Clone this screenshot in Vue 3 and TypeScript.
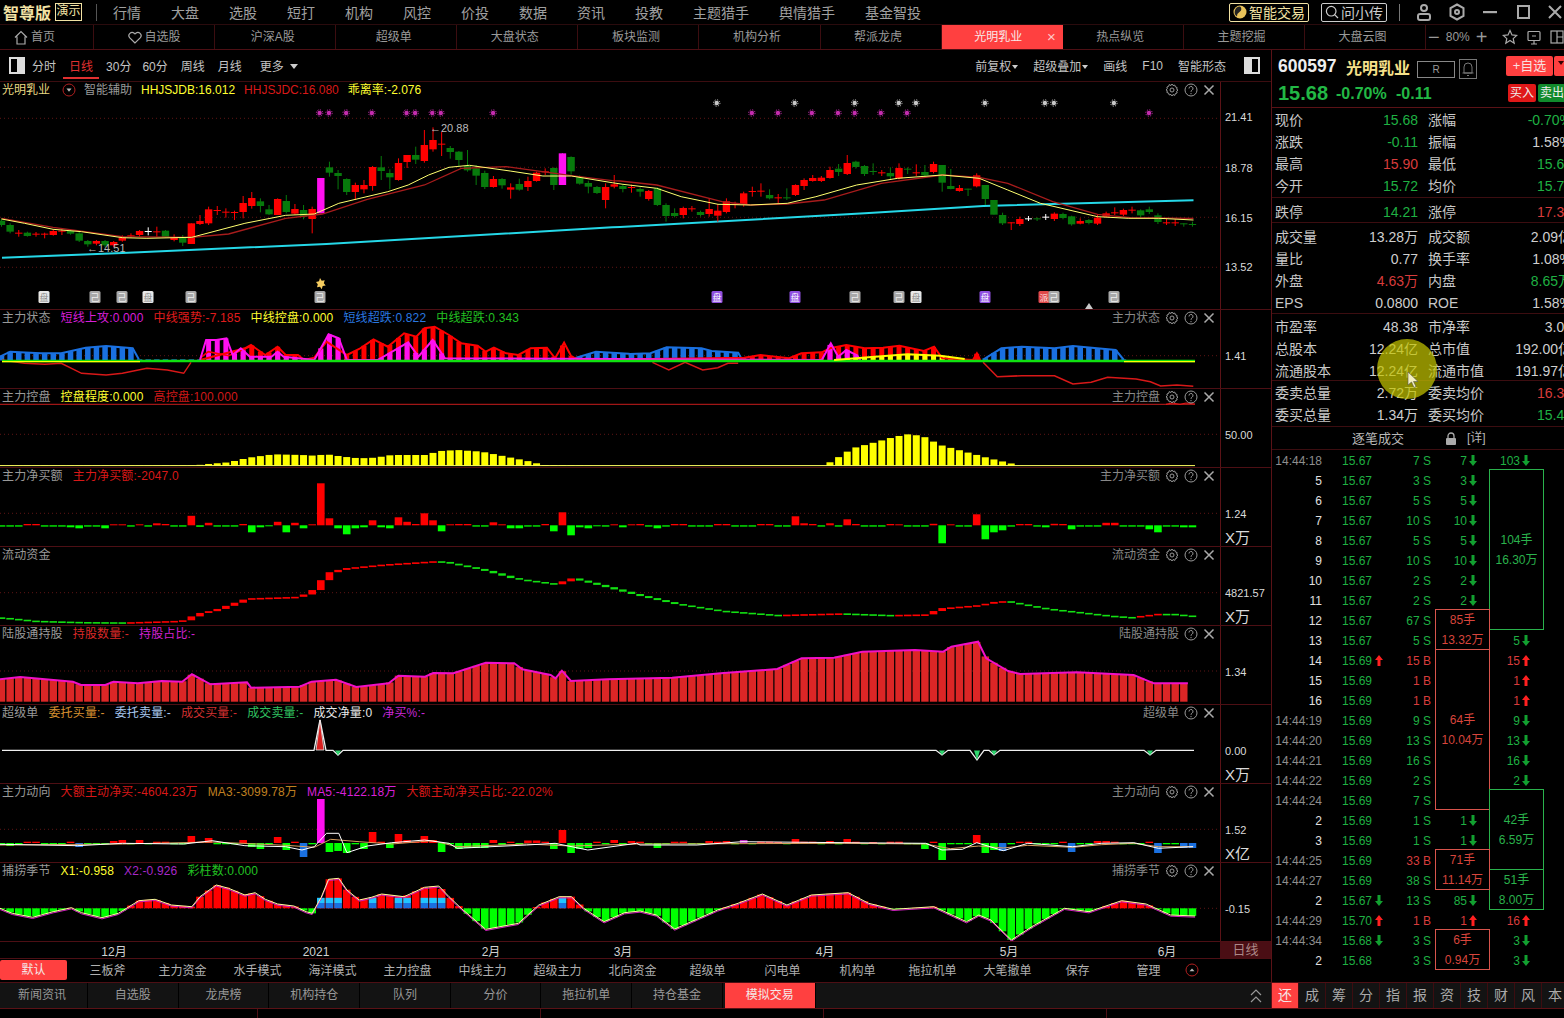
<script setup lang="ts">
import { computed } from 'vue';

type Pt = number[];
interface Bar { x: number; y: number; w: number; h: number; c: string }
interface Line { pts: string; c: string; w: number }
interface Panel {
  key: string;
  top: number;
  height: number;
  main?: boolean;
  legend: Array<[string, string]>;
  title?: string;
  gear: boolean;
  grid: number[];
  bars: Bar[];
  lines: Line[];
  ticks: Array<[string, number, boolean?]>;
}

const RED = '#ff0000';
const GREEN = '#00ff00';
const DGREEN = '#077a0c';
const BLUE = '#1a70e0';
const MAGENTA = '#ff10f0';
const YELLOW = '#ffff00';

const menus = ['行情', '大盘', '选股', '短打', '机构', '风控', '价投', '数据', '资讯', '投教', '主题猎手', '舆情猎手', '基金智投'];
const tabs = ['沪深A股', '超级单', '大盘状态', '板块监测', '机构分析', '帮派龙虎'];
const tabsAfter = ['热点纵览', '主题挖掘', '大盘云图'];
const periods = ['30分', '60分', '周线', '月线'];
const templates = ['三板斧', '主力资金', '水手模式', '海洋模式', '主力控盘', '中线主力', '超级主力', '北向资金', '超级单', '闪电单', '机构单', '拖拉机单', '大笔撤单', '保存', '管理'];
const bottomTabs = ['新闻资讯', '自选股', '龙虎榜', '机构持仓', '队列', '分价', '拖拉机单', '持仓基金'];
const sideTabs = ['还', '成', '筹', '分', '指', '报', '资', '技', '财', '风', '本'];
const dates: Array<[string, number]> = [['12月', 114], ['2021', 316], ['2月', 491], ['3月', 623], ['4月', 825], ['5月', 1009], ['6月', 1167]];

// 报价区: 标签/数值/颜色
const infoGroups = [
  { cls: 'g1', rows: [
    ['现价', '15.68', 'g', '涨幅', '-0.70%', 'g'],
    ['涨跌', '-0.11', 'g', '振幅', '1.58%', 'w'],
    ['最高', '15.90', 'r', '最低', '15.61', 'g'],
    ['今开', '15.72', 'g', '均价', '15.74', 'g'],
  ] },
  { cls: 'g2', rows: [['跌停', '14.21', 'g', '涨停', '17.37', 'r']] },
  { cls: 'g3', rows: [
    ['成交量', '13.28万', 'w', '成交额', '2.09亿', 'w'],
    ['量比', '0.77', 'w', '换手率', '1.08%', 'w'],
    ['外盘', '4.63万', 'r', '内盘', '8.65万', 'g'],
    ['EPS', '0.0800', 'w', 'ROE', '1.58%', 'w'],
  ] },
  { cls: 'g4', rows: [
    ['市盈率', '48.38', 'w', '市净率', '3.03', 'w'],
    ['总股本', '12.24亿', 'w', '总市值', '192.00亿', 'w'],
    ['流通股本', '12.24亿', 'w', '流通市值', '191.97亿', 'w'],
  ] },
  { cls: 'g5', rows: [
    ['委卖总量', '2.72万', 'w', '委卖均价', '16.34', 'r'],
    ['委买总量', '1.34万', 'w', '委买均价', '15.44', 'g'],
  ] },
];

// 逐笔: 时间, 价格, 价格箭头, 量, 方向, 第四列, 第五列 (d=下 u=上)
const ticks: Array<[string, string, string, string, string, string, string]> = [
  ['14:44:18', '15.67', '', '7', 'S', '7d', '103d'],
  ['5', '15.67', '', '3', 'S', '3d', ''],
  ['6', '15.67', '', '5', 'S', '5d', ''],
  ['7', '15.67', '', '10', 'S', '10d', ''],
  ['8', '15.67', '', '5', 'S', '5d', ''],
  ['9', '15.67', '', '10', 'S', '10d', ''],
  ['10', '15.67', '', '2', 'S', '2d', ''],
  ['11', '15.67', '', '2', 'S', '2d', ''],
  ['12', '15.67', '', '67', 'S', '', ''],
  ['13', '15.67', '', '5', 'S', '', '5d'],
  ['14', '15.69', 'u', '15', 'B', '', '15u'],
  ['15', '15.69', '', '1', 'B', '', '1u'],
  ['16', '15.69', '', '1', 'B', '', '1u'],
  ['14:44:19', '15.69', '', '9', 'S', '', '9d'],
  ['14:44:20', '15.69', '', '13', 'S', '', '13d'],
  ['14:44:21', '15.69', '', '16', 'S', '', '16d'],
  ['14:44:22', '15.69', '', '2', 'S', '', '2d'],
  ['14:44:24', '15.69', '', '7', 'S', '', ''],
  ['2', '15.69', '', '1', 'S', '1d', ''],
  ['3', '15.69', '', '1', 'S', '1d', ''],
  ['14:44:25', '15.69', '', '33', 'B', '', ''],
  ['14:44:27', '15.69', '', '38', 'S', '', ''],
  ['2', '15.67', 'd', '13', 'S', '85d', ''],
  ['14:44:29', '15.70', 'u', '1', 'B', '1u', '16u'],
  ['14:44:34', '15.68', 'd', '3', 'S', '', '3d'],
  ['2', '15.68', '', '3', 'S', '', '3d'],
];

const dealBoxes = [
  { a: '104手', b: '16.30万', col: 2, top: 19, h: 161, c: 'g' },
  { a: '85手', b: '13.32万', col: 1, top: 159, h: 41, c: 'r' },
  { a: '64手', b: '10.04万', col: 1, top: 199, h: 161, c: 'r' },
  { a: '42手', b: '6.59万', col: 2, top: 339, h: 81, c: 'g' },
  { a: '51手', b: '8.00万', col: 2, top: 419, h: 41, c: 'g' },
  { a: '71手', b: '11.14万', col: 1, top: 399, h: 41, c: 'r' },
  { a: '6手', b: '0.94万', col: 1, top: 479, h: 41, c: 'r' },
];

const xi = (i: number) => 1.5 + 8.63 * i;

// 放大图坐标换算成页面坐标 (横向2.45 纵向3)
const Z = (pts: Pt[], x0: number, y0: number, sx = 2.45) => pts.map(([a, b]) => [x0 + a / sx, y0 + b / 3]);

function lerp(keys: Pt[], x: number) {
  if (x <= keys[0][0]) return keys[0][1];
  for (let i = 1; i < keys.length; i++) {
    if (x <= keys[i][0]) {
      const t = (x - keys[i - 1][0]) / (keys[i][0] - keys[i - 1][0]);
      return keys[i - 1][1] + t * (keys[i][1] - keys[i - 1][1]);
    }
  }
  return keys[keys.length - 1][1];
}

const toPts = (pts: Pt[]) => pts.map(p => `${p[0].toFixed(1)},${p[1].toFixed(1)}`).join(' ');

// 包络柱: 柱子顶部沿 keys 走
function envBars(keys: Pt[], base: number, color: string, w: number, x1 = 0, x2 = 1200) {
  const out: Bar[] = [];
  for (let i = 0; i < 139; i++) {
    const x = xi(i);
    if (x < x1 || x > x2) continue;
    const top = lerp(keys, x);
    if (top < base) out.push({ x: x - w / 2, y: top, w, h: base - top, c: color });
  }
  return out;
}

// 净额柱: vals 里是高度, 正红负绿
function netBars(vals: Record<number, number | [number, string]>, base: number) {
  const out: Bar[] = [];
  for (let i = 0; i < 139; i++) {
    const v = vals[i];
    let val = i % 5 < 3 ? -1.3 : 1.3;
    let c = '';
    if (Array.isArray(v)) { val = v[0]; c = v[1]; }
    else if (v !== undefined) val = v;
    if (!c) c = val > 0 ? RED : GREEN;
    out.push({ x: xi(i) - 3.8, y: val > 0 ? base - val : base, w: 7.6, h: Math.abs(val), c });
  }
  return out;
}

// 日K: 实体上, 实体下, 最高, 最低, 类型 0绿 1红 2洋红 3白
const candles: number[][] = [
  [392, 405, 385, 410, 0], [405, 425, 400, 430, 0], [428, 431, 420, 440, 1], [428, 438, 425, 440, 0], [431, 434, 426, 440, 1],
  [431, 434, 428, 445, 1], [423, 435, 418, 437, 1], [422, 424, 415, 435, 1], [423, 431, 420, 434, 0], [430, 452, 426, 456, 0],
  [453, 463, 450, 470, 0], [453, 461, 450, 466, 1], [453, 466, 450, 472, 0], [456, 466, 453, 472, 1], [443, 452, 436, 455, 1],
  [436, 438, 430, 443, 1], [423, 435, 420, 440, 1], [423, 425, 412, 436, 3], [424, 426, 410, 440, 1], [422, 441, 420, 443, 0],
  [442, 450, 433, 454, 1], [441, 458, 435, 468, 0], [400, 462, 400, 462, 1], [393, 402, 375, 405, 1], [358, 400, 350, 405, 1],
  [360, 362, 348, 375, 1], [365, 367, 355, 383, 1], [366, 368, 362, 390, 1], [339, 366, 318, 385, 1], [324, 348, 306, 356, 1],
  [334, 348, 325, 367, 0], [358, 373, 345, 375, 0], [327, 375, 325, 375, 1], [333, 366, 315, 370, 0], [357, 371, 342, 374, 1],
  [360, 380, 345, 388, 0], [357, 387, 350, 430, 1], [264, 370, 264, 370, 2], [232, 248, 215, 260, 0], [249, 258, 240, 298, 0],
  [267, 306, 265, 315, 0], [285, 306, 278, 330, 1], [285, 298, 270, 310, 1], [231, 288, 228, 302, 1], [232, 243, 198, 270, 0],
  [249, 262, 238, 298, 0], [219, 270, 205, 272, 1], [195, 216, 195, 234, 1], [195, 209, 170, 222, 0], [165, 213, 120, 218, 1],
  [150, 178, 112, 185, 1], [161, 163, 125, 198, 1], [174, 186, 168, 206, 0], [185, 210, 183, 228, 0], [228, 241, 180, 245, 0],
  [235, 257, 225, 285, 0], [249, 291, 242, 297, 0], [267, 291, 258, 293, 1], [267, 286, 264, 296, 0], [292, 299, 280, 326, 1],
  [282, 299, 266, 302, 0], [273, 291, 260, 303, 1], [248, 273, 245, 275, 1], [244, 246, 235, 255, 1], [234, 285, 232, 300, 0],
  [190, 285, 190, 285, 2], [201, 244, 199, 254, 0], [262, 281, 256, 284, 0], [279, 290, 272, 310, 0], [291, 309, 288, 312, 0],
  [291, 330, 280, 355, 1], [283, 290, 255, 295, 1], [288, 297, 282, 307, 0], [291, 293, 284, 308, 1], [297, 305, 292, 320, 0],
  [303, 327, 300, 332, 1], [295, 345, 292, 348, 0], [345, 378, 340, 395, 0], [369, 378, 355, 382, 0], [354, 375, 350, 385, 1],
  [355, 357, 348, 365, 1], [366, 375, 362, 380, 0], [357, 372, 325, 380, 1], [362, 377, 343, 395, 1], [334, 366, 325, 370, 1],
  [341, 343, 335, 355, 1], [310, 342, 305, 350, 1], [303, 305, 290, 320, 1], [302, 304, 280, 320, 1], [315, 325, 298, 328, 0],
  [322, 324, 312, 340, 1], [322, 324, 295, 330, 0], [285, 315, 283, 318, 1], [270, 288, 265, 300, 1], [264, 273, 255, 275, 1],
  [263, 273, 258, 276, 1], [240, 264, 230, 266, 1], [236, 246, 222, 258, 0], [219, 252, 195, 255, 1], [215, 231, 212, 236, 0],
  [228, 252, 225, 258, 0], [243, 245, 220, 255, 0], [247, 250, 240, 258, 1], [249, 259, 232, 268, 0], [234, 265, 220, 268, 1],
  [236, 238, 232, 252, 0], [247, 249, 223, 258, 1], [246, 256, 225, 262, 0], [222, 246, 215, 250, 1], [225, 278, 225, 305, 0],
  [288, 297, 237, 298, 0], [294, 303, 285, 305, 1], [296, 298, 296, 318, 0], [256, 289, 250, 292, 1], [285, 327, 285, 345, 0],
  [330, 374, 330, 374, 0], [375, 400, 368, 405, 0], [397, 399, 397, 420, 1], [387, 402, 380, 408, 1], [385, 387, 378, 393, 3],
  [385, 387, 382, 393, 0], [380, 382, 372, 390, 3], [371, 387, 367, 393, 1], [372, 384, 368, 388, 0], [379, 403, 377, 407, 0],
  [393, 401, 385, 403, 1], [390, 399, 387, 403, 0], [383, 401, 372, 405, 1], [370, 380, 365, 382, 1], [367, 369, 352, 375, 1],
  [360, 374, 356, 378, 1], [359, 361, 350, 370, 1], [361, 376, 358, 382, 0], [358, 366, 350, 372, 0], [376, 396, 370, 402, 0],
  [397, 399, 385, 405, 1], [397, 399, 388, 408, 1], [400, 402, 400, 410, 0], [402, 404, 395, 410, 0],
];

function candleBars() {
  const out: Bar[] = [];
  const colors = [DGREEN, RED, MAGENTA, '#ffffff'];
  candles.forEach((k, i) => {
    const x = xi(i);
    const c = colors[k[4]];
    const y = (v: number) => 90 + v / 3;
    out.push({ x: x - 0.5, y: y(k[2]), w: 1, h: (k[3] - k[2]) / 3, c });
    const w = k[4] === 3 ? 7 : 7.4;
    out.push({ x: x - w / 2, y: y(k[0]), w, h: Math.max(1, (k[1] - k[0]) / 3), c });
  });
  return out;
}

const yellowMa = [
  ...Z([[4, 387], [60, 400], [130, 418], [200, 425], [300, 443], [360, 445], [470, 442], [600, 400], [700, 376], [770, 372], [830, 340], [950, 305], [1000, 285], [1050, 255], [1100, 232], [1150, 226], [1250, 243], [1330, 258], [1400, 258], [1500, 278]], 0, 90),
  ...Z([[7, 283], [90, 295], [150, 320], [240, 343], [320, 345], [410, 340], [480, 320], [580, 285], [680, 265], [790, 255], [880, 265], [950, 300], [1030, 340], [1100, 360], [1170, 380], [1245, 385], [1320, 385], [1405, 390]], 620, 90),
];
const redMa = [
  ...Z([[4, 385], [130, 412], [300, 440], [470, 442], [560, 432], [700, 385], [790, 372], [900, 328], [1040, 285], [1130, 235], [1240, 230], [1400, 257], [1500, 272]], 0, 90),
  ...Z([[0, 273], [90, 285], [250, 335], [320, 345], [410, 342], [500, 330], [640, 280], [790, 255], [880, 262], [950, 280], [1060, 335], [1170, 373], [1250, 383], [1405, 385]], 620, 90),
];
const cyanMa = [
  ...Z([[5, 503], [300, 489], [800, 462], [1500, 412]], 0, 90),
  ...Z([[0, 411], [600, 370], [890, 348], [1405, 331]], 620, 90),
];

// 主力状态
const p1Blue = [
  ...Z([[0, 155], [25, 140], [100, 145], [150, 145], [210, 128], [260, 123], [325, 130], [340, 163], [1400, 163], [1460, 140], [1540, 146]], 0, 305),
  ...Z([[0, 147], [50, 145], [90, 127], [175, 130], [200, 138], [265, 143], [275, 165], [869, 165], [870, 160], [910, 130], [960, 125], [1040, 130], [1085, 123], [1190, 135], [1210, 165]], 630, 305),
];
const p1Red = [
  ...Z([[490, 165], [600, 130], [615, 120], [650, 150], [680, 125], [700, 150], [730, 150], [745, 165], [770, 158], [800, 110], [850, 150], [880, 132], [915, 103], [950, 125], [990, 85], [1020, 95], [1040, 70], [1065, 65], [1100, 90], [1130, 115], [1170, 122], [1190, 140], [1210, 128], [1240, 145], [1270, 150], [1300, 130], [1340, 128], [1360, 160], [1382, 113], [1400, 155], [1420, 165]], 0, 305),
  ...Z([[280, 158], [320, 150], [390, 160], [420, 145], [470, 142], [490, 130], [530, 120], [575, 130], [620, 128], [660, 122], [720, 138], [745, 125], [765, 160], [840, 165], [850, 145], [858, 165]], 630, 305),
];
const p1Mag = [
  ...Z([[490, 165], [505, 105], [530, 105], [555, 100], [570, 150], [590, 130], [612, 155], [665, 155], [680, 140], [695, 155], [770, 165], [805, 88], [830, 100], [850, 165], [925, 165], [1000, 112], [1025, 155], [1060, 105], [1090, 160]], 0, 305),
  ...Z([[470, 165], [492, 115], [510, 155], [530, 135], [555, 150], [565, 165]], 630, 305),
];
const p1Yellow = Z([[500, 165], [600, 155], [680, 148], [760, 152], [820, 162]], 630, 305);
const p1Low = [
  ...Z([[5, 165], [60, 175], [110, 178], [150, 175], [200, 205], [260, 210], [300, 205], [360, 190], [410, 195], [450, 205], [468, 172]], 0, 305),
];
const p1Low2 = Z([[55, 172], [95, 195], [135, 172], [178, 195], [215, 188], [240, 175], [265, 175]], 630, 305);
const p1Low3 = Z([[865, 172], [900, 215], [960, 212], [1040, 212], [1085, 237], [1130, 232], [1170, 217], [1240, 222], [1275, 230], [1300, 243], [1340, 240], [1380, 244]], 630, 305);
const p1Top = Z([[490, 160], [510, 140], [560, 152], [612, 125]], 0, 305);

// 主力控盘
const p2Keys = [
  ...Z([[480, 481], [500, 478], [560, 472], [610, 458], [670, 448], [740, 450], [770, 452], [800, 448], [840, 455], [880, 460], [920, 458], [960, 450], [1000, 450], [1040, 450], [1080, 438], [1120, 435], [1180, 440], [1240, 455], [1300, 470], [1330, 480], [1500, 482]], 0, 305),
  ...Z([[475, 482], [500, 465], [545, 430], [600, 412], [650, 395], [685, 387], [720, 395], [760, 420], [820, 440], [880, 460], [950, 480], [960, 483]], 630, 305),
];

const p3Vals: Record<number, number> = {
  8: -2, 9: -3, 12: -3, 13: 1, 14: 1, 16: 1, 18: 2, 22: 9.5, 23: -1.5, 24: 2.5, 29: -7, 30: -2, 31: -1, 32: 3.5, 33: -7, 34: 2.5, 35: -3, 36: 1,
  37: 42, 38: 7, 39: -3, 40: -9, 41: -3, 42: -2, 43: 5, 44: -2, 45: -3, 46: 8, 47: 3.5, 49: 12, 50: 5, 51: -6, 52: 1, 57: 3, 58: 1, 59: -3, 60: -3,
  64: -6, 65: 13, 66: -10, 67: -2, 68: -3, 69: -1, 71: 1, 72: -2, 73: 1, 76: -3, 92: 9, 93: 2, 96: 2, 98: 6, 104: 1, 108: 1.5, 109: -18, 110: 1,
  113: 11, 114: -14, 115: -7, 116: -5, 121: -2, 122: 1.5, 124: -4, 128: 2.5, 129: 2.5, 133: -4, 134: -7, 137: -2, 138: -2,
};

// 流动资金
const p4Keys = Z([[0, 217], [40, 227], [100, 231], [160, 232], [230, 227], [250, 205], [270, 195], [310, 160], [375, 155], [395, 130], [407, 85], [430, 70], [480, 58], [545, 48], [600, 75], [640, 102], [690, 118], [710, 100], [740, 118], [790, 150], [840, 178], [890, 197], [960, 210], [1040, 205], [1100, 210], [1150, 208], [1165, 190], [1215, 180], [1240, 167], [1290, 190], [1370, 212], [1400, 217], [1440, 205], [1478, 214]], 0, 545, 1.235);
function flowBars() {
  const out: Bar[] = [];
  for (let i = 0; i < 139; i++) {
    const a = lerp(p4Keys, xi(i) - 4.3);
    const b = lerp(p4Keys, xi(i) + 4.3);
    out.push({ x: xi(i) - 3.8, y: Math.min(a, b), w: 7.6, h: Math.max(1.6, Math.abs(a - b)), c: b < a - 0.1 ? RED : '#12e012' });
  }
  return out;
}

// 陆股通持股
const p5Keys = Z([[0, 403], [25, 396], [90, 410], [100, 420], [130, 420], [140, 410], [170, 415], [200, 408], [225, 410], [237, 388], [260, 418], [305, 412], [310, 428], [370, 425], [385, 410], [415, 404], [440, 426], [480, 415], [492, 392], [525, 395], [535, 384], [560, 385], [600, 353], [635, 355], [645, 373], [680, 390], [686, 400], [694, 377], [705, 408], [750, 403], [830, 398], [890, 385], [960, 372], [990, 340], [1030, 338], [1065, 320], [1130, 315], [1165, 320], [1175, 305], [1208, 290], [1218, 340], [1245, 378], [1260, 387], [1330, 382], [1400, 390], [1425, 415], [1467, 415]], 0, 545, 1.235);

// 超级单
const p6Line = [[2, 750.3], [314, 750.3], [320, 720], [326, 750.3], [333, 750.3], [338, 755], [343, 750.3], [936, 750.3], [942, 755], [948, 750.3], [970, 750.3], [977, 760], [984, 750.3], [989, 750.3], [994, 755], [1000, 750.3], [1144, 750.3], [1150, 755], [1156, 750.3], [1194, 750.3]];

// 主力动向
const p7Vals: Record<number, number | [number, string]> = {
  1: -3, 9: [-4, BLUE], 13: 2, 14: 3, 16: 3, 22: 7, 24: 5, 28: 3, 29: -4, 30: -6, 32: 6, 33: -7, 35: [-14, BLUE], 37: [44, MAGENTA], 38: -9, 39: -8, 40: -10,
  42: -6, 43: 11, 45: -5, 46: 9, 47: 3, 49: 7, 50: 3, 51: -9, 53: -6, 54: -5, 55: -5, 56: -5, 57: 3, 58: -2, 61: 2.5, 62: 2.5, 64: -6, 65: 13, 66: -10,
  67: -6, 68: -5, 71: 3, 73: 2, 76: -5, 82: 2, 84: 2, 86: [3, '#c030c0'], 90: 1, 92: 4, 96: 2, 98: 4, 101: 1, 107: -6, 109: -17, 113: 8, 114: -10, 115: -7,
  116: [-8, BLUE], 124: [-9, BLUE], 127: 2, 128: 2, 134: [-10, BLUE], 137: [-5, BLUE], 138: [-5, BLUE],
};
const p7White = [
  ...Z([[0, 193], [190, 197], [300, 190], [450, 192], [520, 182], [600, 197], [700, 200], [740, 210], [770, 200], [800, 160], [830, 160], [850, 218], [900, 198], [960, 188], [1040, 180], [1100, 190], [1120, 205], [1290, 195], [1360, 190], [1440, 210], [1560, 190]], 0, 780),
  ...Z([[0, 195], [140, 195], [250, 185], [500, 188], [700, 190], [740, 210], [790, 208], [825, 188], [890, 212], [950, 190], [1060, 200], [1130, 190], [1210, 188], [1270, 205], [1355, 200]], 640, 780),
];
const p7Tan = [
  ...Z([[0, 195], [300, 192], [520, 186], [700, 196], [770, 202], [810, 178], [880, 185], [960, 192], [1060, 182], [1120, 200], [1290, 192], [1400, 198], [1560, 192]], 0, 780),
  ...Z([[0, 192], [500, 190], [700, 192], [760, 206], [830, 198], [890, 204], [950, 196], [1060, 202], [1130, 194], [1210, 190], [1270, 200], [1355, 200]], 640, 780),
];

// 捕捞季节
const p8Keys = [
  ...Z([[0, 385], [30, 400], [80, 412], [130, 395], [175, 383], [200, 398], [250, 413], [290, 400], [340, 362], [380, 358], [420, 375], [470, 380], [490, 350], [530, 315], [560, 325], [600, 345], [625, 338], [650, 358], [680, 372], [720, 378], [750, 395], [765, 400], [787, 352], [805, 298], [830, 295], [850, 330], [880, 360], [910, 352], [935, 342], [990, 350], [1040, 322], [1075, 318], [1100, 350], [1130, 385], [1190, 448], [1270, 430], [1320, 375], [1370, 350], [1400, 350], [1430, 385], [1480, 425], [1530, 398]], 0, 780),
  ...Z([[0, 393], [40, 405], [85, 447], [190, 390], [240, 370], [300, 342], [360, 375], [420, 345], [510, 338], [560, 370], [620, 388], [720, 380], [800, 425], [830, 405], [860, 420], [910, 480], [960, 440], [1040, 385], [1100, 395], [1180, 362], [1240, 372], [1300, 405], [1360, 408]], 640, 780),
];
function seasonBars() {
  const base = 908.3;
  const out: Bar[] = [];
  const capped = [37, 38, 39, 43, 46, 47, 49, 50, 51, 65];
  for (let i = 0; i < 139; i++) {
    const x = xi(i);
    const top = lerp(p8Keys, x);
    if (top < base) {
      out.push({ x: x - 3.8, y: top, w: 7.6, h: base - top, c: RED });
      if (capped.includes(i)) {
        out.push({ x: x - 3.8, y: base - 10.5, w: 7.6, h: 5.2, c: '#22c4ff' });
        out.push({ x: x - 3.8, y: base - 5.3, w: 7.6, h: 5.3, c: BLUE });
      }
    } else {
      out.push({ x: x - 3.8, y: base, w: 7.6, h: top - base, c: GREEN });
    }
  }
  return out;
}

const panels = computed<Panel[]>(() => [
  {
    key: 'kline', top: 82, height: 228, main: true, gear: true,
    legend: [['智能辅助', '#999'], ['HHJSJDB:16.012', '#ffff30'], ['HHJSJDC:16.080', '#d81818'], ['乖离率:-2.076', '#ffff30']],
    grid: [118.3, 167.3, 217.3, 267.3],
    bars: candleBars(),
    lines: [
      { pts: toPts(cyanMa), c: '#25d8e8', w: 2 },
      { pts: toPts(redMa), c: '#a81c1c', w: 1.3 },
      { pts: toPts(yellowMa), c: '#ffff70', w: 1 },
    ],
    ticks: [['21.41', 117], ['18.78', 168], ['16.15', 218], ['13.52', 267]],
  },
  {
    key: 'status', top: 310, height: 79, title: '主力状态', gear: true,
    legend: [['主力状态', '#999'], ['短线上攻:0.000', '#d81ed8'], ['中线强势:-7.185', '#e01c1c'], ['中线控盘:0.000', '#ffff30'], ['短线超跌:0.822', '#2a78e0'], ['中线超跌:0.343', '#22c022']],
    grid: [355.7],
    bars: [
      ...envBars(p1Blue, 360.5, BLUE, 5.5),
      ...envBars(p1Red, 360.5, RED, 5, 190, 990),
      ...envBars(p1Mag, 360.5, MAGENTA, 5, 190, 880),
      ...envBars(p1Yellow, 360.5, YELLOW, 5, 830, 970),
    ],
    lines: [
      { pts: toPts(p1Blue.filter(p => p[0] < 142)), c: BLUE, w: 2 },
      { pts: toPts(p1Blue.filter(p => p[0] > 570 && p[0] < 745)), c: BLUE, w: 2 },
      { pts: toPts(p1Blue.filter(p => p[0] > 984)), c: BLUE, w: 2 },
      { pts: toPts(p1Red), c: RED, w: 2 },
      { pts: toPts(p1Top), c: RED, w: 1.6 },
      { pts: toPts(p1Mag), c: MAGENTA, w: 2 },
      { pts: toPts(p1Low), c: '#d81818', w: 1.4 },
      { pts: toPts(p1Low2), c: '#d81818', w: 1.4 },
      { pts: toPts(p1Low3), c: '#d81818', w: 1.6 },
      { pts: '2,361 1195,361', c: '#10e010', w: 2.4 },
      { pts: '2,361.6 140,361.6', c: YELLOW, w: 1.2 },
      { pts: '1124,361.6 1195,361.6', c: YELLOW, w: 1.2 },
      { pts: toPts(p1Yellow), c: YELLOW, w: 2 },
    ],
    ticks: [['1.41', 356]],
  },
  {
    key: 'control', top: 389, height: 79, title: '主力控盘', gear: true,
    legend: [['主力控盘', '#999'], ['控盘程度:0.000', '#ffff30'], ['高控盘:100.000', '#d01818']],
    grid: [434.3],
    bars: envBars(p2Keys, 465.6, YELLOW, 7),
    lines: [
      { pts: '0,404.3 1195,404.3', c: '#a01616', w: 1.2 },
      { pts: '1166,404.3 1172,403 1180,404.3 1186,403 1195,404', c: '#e01818', w: 1.2 },
      { pts: '0,465.6 1195,465.6', c: '#ffff60', w: 1 },
    ],
    ticks: [['50.00', 435]],
  },
  {
    key: 'netbuy', top: 468, height: 79, title: '主力净买额', gear: true,
    legend: [['主力净买额', '#999'], ['主力净买额:-2047.0', '#d81818']],
    grid: [513.3],
    bars: netBars(p3Vals, 525.3),
    lines: [],
    ticks: [['1.24', 514], ['X万', 536, true]],
  },
  {
    key: 'flow', top: 547, height: 79, title: '流动资金', gear: true,
    legend: [['流动资金', '#999']],
    grid: [592.7],
    bars: flowBars(),
    lines: [],
    ticks: [['4821.57', 593], ['X万', 615, true]],
  },
  {
    key: 'north', top: 626, height: 79, title: '陆股通持股', gear: false,
    legend: [['陆股通持股', '#999'], ['持股数量:-', '#d82828'], ['持股占比:-', '#d020d0']],
    grid: [671],
    bars: envBars(p5Keys, 701.7, '#dc2626', 7.4, 0, 1188),
    lines: [{ pts: toPts(p5Keys), c: '#f010c8', w: 2 }],
    ticks: [['1.34', 672]],
  },
  {
    key: 'super', top: 705, height: 79, title: '超级单', gear: false,
    legend: [['超级单', '#999'], ['委托买量:-', '#d89030'], ['委托卖量:-', '#a8c8f0'], ['成交买量:-', '#d03030'], ['成交卖量:-', '#30c060'], ['成交净量:0', '#e8e8e8'], ['净买%:-', '#c828d8']],
    grid: [],
    bars: [],
    lines: [{ pts: toPts(p6Line), c: '#f0f0f0', w: 1.3 }],
    ticks: [['0.00', 751], ['X万', 773, true]],
  },
  {
    key: 'move', top: 784, height: 79, title: '主力动向', gear: true,
    legend: [['主力动向', '#999'], ['大额主动净买:-4604.23万', '#d81818'], ['MA3:-3099.78万', '#c08020'], ['MA5:-4122.18万', '#d820d8'], ['大额主动净买占比:-22.02%', '#d81818']],
    grid: [829.3],
    bars: netBars(p7Vals, 843),
    lines: [
      { pts: toPts(p7Tan), c: '#d8a060', w: 1 },
      { pts: toPts(p7White), c: '#ffffff', w: 1 },
    ],
    ticks: [['1.52', 830], ['X亿', 852, true]],
  },
  {
    key: 'season', top: 863, height: 79, title: '捕捞季节', gear: true,
    legend: [['捕捞季节', '#999'], ['X1:-0.958', '#ffff30'], ['X2:-0.926', '#a828c8'], ['彩柱数:0.000', '#22c022']],
    grid: [908.3],
    bars: seasonBars(),
    lines: [
      { pts: toPts(p8Keys.map(p => [p[0], p[1] + 1.2])), c: '#d020c0', w: 1 },
      { pts: toPts(p8Keys), c: '#ffffa0', w: 1 },
    ],
    ticks: [['-0.15', 909]],
  },
]);

const superDips = [[338, 4.8], [942, 4.8], [977, 9.5], [994, 4.8], [1150, 4.8]];
const pinkStars = [...[783, 806, 848, 911, 996, 1017, 1059, 1080, 1208].map(z => z / 2.45), ...[323, 387, 470, 534, 575, 639, 703, 1296].map(z => 620 + z / 2.45)];
const greyStars = [237, 428, 575, 683, 725, 894, 1041, 1063, 1210].map(z => 620 + z / 2.45);
// 事件标记: x, 类型 g灰 w白 p紫 r红
const markers: Array<[number, string]> = [[44, 'w'], [95, 'g'], [122, 'g'], [148, 'w'], [191, 'g'], [320, 'g'], [717, 'p'], [795, 'p'], [855, 'g'], [899, 'g'], [916, 'w'], [985, 'p'], [1044, 'r'], [1054, 'g'], [1114, 'g']];

const isUp = (s: string) => s.endsWith('u');
const num = (s: string) => s.slice(0, -1);
</script>

<template>
  <div class="app">
    <header class="topbar">
      <div class="logo">智尊版</div>
      <div class="demo">演示</div>
      <i class="sep"></i>
      <nav class="menu"><span v-for="m in menus" :key="m">{{ m }}</span></nav>
      <div class="top-right">
        <button class="pill trade">
          <svg width="14" height="14" viewBox="0 0 14 14"><circle cx="7" cy="7" r="6.5" fill="#e8c25a" /><path d="M7 1.5a5.5 5.5 0 0 0-3 10 6 6 0 0 1 3-5 3 3 0 0 0 0-5z" fill="#222" /></svg>
          智能交易
        </button>
        <button class="pill ask">
          <svg width="14" height="14" viewBox="0 0 14 14" fill="none" stroke="#ccc" stroke-width="1.2"><circle cx="6.2" cy="6.2" r="4.8" /><path d="M9.6 9.6 13 13" /></svg>
          问小传
        </button>
        <i class="sep light"></i>
        <svg class="win" width="16" height="18" viewBox="0 0 16 18" fill="none" stroke="#aaa" stroke-width="2"><circle cx="8" cy="5" r="3" /><rect x="2" y="11" width="12" height="6" rx="2" /></svg>
        <svg class="win" width="16" height="18" viewBox="0 0 16 18" fill="none" stroke="#aaa" stroke-width="2"><path d="M8 1.5 14.5 5v8L8 16.5 1.5 13V5z" /><circle cx="8" cy="9" r="2" /></svg>
        <svg class="win" width="16" height="18" viewBox="0 0 16 18"><rect x="1" y="8" width="14" height="2.2" fill="#aaa" /></svg>
        <svg class="win" width="16" height="18" viewBox="0 0 16 18" fill="none" stroke="#aaa" stroke-width="2"><rect x="3" y="3" width="11" height="12" /></svg>
        <svg class="win" width="16" height="18" viewBox="0 0 16 18" stroke="#aaa" stroke-width="2"><path d="M2 3l12 12M14 3 2 15" /></svg>
      </div>
    </header>

    <div class="tabs">
      <div class="tab home">
        <svg width="14" height="15" viewBox="0 0 14 15" fill="none" stroke="#aaa" stroke-width="1.2"><path d="M1 7.5 7 1.5l6 6M3 6.5V14h8V6.5" /></svg>
        首页
      </div>
      <div class="tab fav">
        <svg width="14" height="13" viewBox="0 0 14 13" fill="none" stroke="#aaa" stroke-width="1.2"><path d="M7 12 1.6 6.6a3.2 3.2 0 0 1 4.6-4.4L7 3l.8-.8a3.2 3.2 0 0 1 4.6 4.4z" /></svg>
        自选股
      </div>
      <div v-for="t in tabs" :key="t" class="tab">{{ t }}</div>
      <div class="tab active">光明乳业<span class="tab-x">×</span></div>
      <div v-for="t in tabsAfter" :key="t" class="tab">{{ t }}</div>
      <div class="zoom-tools">
        <span class="big">−</span>
        <span>80%</span>
        <span class="big">+</span>
        <svg class="star" width="16" height="16" viewBox="0 0 16 16" fill="none" stroke="#aaa" stroke-width="1.2"><path d="m8 1.5 2 4.4 4.7.5-3.5 3.2 1 4.7L8 11.500l-4.200 2.800 1-4.700L1.300 6.400 6 5.900z" /></svg>
        <svg class="pad" width="14" height="15" viewBox="0 0 14 15" fill="none" stroke="#aaa" stroke-width="1.2"><rect x="1" y="1.500" width="12" height="9" rx="1" /><path d="M7 10.500V14M4 14h6M5 6h4" /></svg>
        <svg class="pad" width="14" height="14" viewBox="0 0 14 14" fill="none" stroke="#aaa" stroke-width="1.2"><rect x="1" y="1" width="12" height="12" /><path d="M7 1v12M7 7h6" /></svg>
      </div>
    </div>

    <main class="body">
      <div class="left">
        <div class="toolbar">
          <div class="split-icon"></div>
          <span class="tb first">分时</span>
          <span class="tb on">日线</span>
          <span v-for="p in periods" :key="p" class="tb" :class="{ tight: p === '60分' }">{{ p }}</span>
          <span class="tb more">更多 <i class="caret"></i></span>
          <div class="tb-right">
            <span>前复权<i class="caret small"></i></span>
            <span>超级叠加<i class="caret small"></i></span>
            <span>画线</span>
            <span>F10</span>
            <span>智能形态</span>
            <div class="split-icon rev"></div>
          </div>
        </div>

        <section v-for="p in panels" :key="p.key" class="panel" :class="{ 'panel-main': p.main }" :style="{ height: p.height + 'px' }">
          <div class="plot">
            <svg class="chart" width="1220" :height="p.height" :viewBox="`0 ${p.top} 1220 ${p.height}`">
              <line v-for="g in p.grid" :key="g" x1="0" x2="1220" :y1="g" :y2="g" stroke="#5e1414" stroke-dasharray="1 3" />
              <template v-if="p.key === 'kline'">
                <polyline v-for="l in p.lines.slice(0, 1)" :key="l.c" :points="l.pts" fill="none" :stroke="l.c" :stroke-width="l.w" />
              </template>
              <rect v-for="(b, i) in p.bars" :key="i" :x="b.x" :y="b.y" :width="b.w" :height="b.h" :fill="b.c" />
              <polyline v-for="l in (p.key === 'kline' ? p.lines.slice(1) : p.lines)" :key="l.pts.length + l.c" :points="l.pts" fill="none" :stroke="l.c" :stroke-width="l.w" />

              <template v-if="p.key === 'super'">
                <polygon points="316,750 320,720 324,750" fill="#d82020" stroke="#f0f0f0" stroke-width="0.8" />
                <polygon v-for="d in superDips" :key="d[0]" :points="`${d[0] - 3},750.5 ${d[0] + 3},750.5 ${d[0]},${750.5 + d[1]}`" fill="#30d870" />
              </template>

              <template v-if="p.main">
                <g v-for="x in greyStars" :key="'g' + x">
                  <circle :cx="x" cy="103" r="2.2" fill="#c8c8c8" />
                  <circle :cx="x" cy="103" r="3.2" fill="none" stroke="#c8c8c8" stroke-width="1" stroke-dasharray="1.200 1.300" />
                </g>
                <g v-for="x in pinkStars" :key="'p' + x">
                  <circle :cx="x" cy="113" r="2.2" fill="#c42cae" />
                  <circle :cx="x" cy="113" r="3.2" fill="none" stroke="#c42cae" stroke-width="1" stroke-dasharray="1.200 1.300" />
                </g>
                <text x="430" y="132" class="hl">←20.88</text>
                <text x="87" y="252" class="hl">←14.51</text>
                <path d="m320 278 1.700 2.700 3-.5-.9 3 1.900 2.300-3 .6-1 3.200-1.700-2.500-3 .5.800-3-1.800-2.400 3-.7z" fill="#f5cc60" />
                <g v-for="m in markers" :key="m[0]">
                  <rect :x="m[0] - 5.500" y="291" width="11" height="12" rx="1.500" :class="'mk-' + m[1]" />
                  <text :x="m[0]" y="300.500" text-anchor="middle" class="mk-text" :class="'mt-' + m[1]">{{ m[1] === 'r' ? '派' : m[1] === 'g' ? '己' : '盘' }}</text>
                </g>
                <polygon points="1085,309 1093,309 1089,303" fill="#c8c8c8" />
              </template>
            </svg>

            <div class="head">
              <div class="legend">
                <template v-if="p.main">
                  <span class="stock">光明乳业</span>
                  <svg class="drop" width="14" height="14" viewBox="0 0 14 14"><circle cx="7" cy="7" r="6" fill="none" stroke="#b02020" /><path d="M4.500 5.500h5L7 8.800z" fill="#bbb" /></svg>
                </template>
                <span v-for="l in p.legend" :key="l[0]" :style="{ color: l[1] }">{{ l[0] }}</span>
              </div>
              <div class="tools">
                <span v-if="p.title" class="ptitle">{{ p.title }}</span>
                <svg v-if="p.gear" width="14" height="14" viewBox="0 0 14 14" fill="none" stroke="#999"><path d="M7 1 8 2.500l1.800-.4.600 1.800 1.700.6-.4 1.800L13 7l-1.300 1.200.4 1.800-1.700.6-.6 1.800L8 11.500 7 13l-1-1.500-1.800.4-.6-1.800-1.700-.6.400-1.800L1 7l1.300-1.200-.4-1.800 1.700-.6.600-1.800L6 2.500z" /><circle cx="7" cy="7" r="2" /></svg>
                <svg width="14" height="14" viewBox="0 0 14 14" fill="none" stroke="#999"><circle cx="7" cy="7" r="6" /><path d="M5 5.500a2 2 0 1 1 3 1.700c-.7.400-1 .8-1 1.600M7 10v1.200" /></svg>
                <svg width="12" height="12" viewBox="0 0 12 12" stroke="#aaa" stroke-width="1.500"><path d="m1.500 1.500 9 9M10.500 1.500l-9 9" /></svg>
              </div>
            </div>
          </div>
          <div class="axis">
            <span v-for="t in p.ticks" :key="t[0]" class="tick" :class="{ unit: t[2] }" :style="{ top: t[1] - p.top + 'px' }">{{ t[0] }}</span>
          </div>
        </section>

        <div class="dates">
          <div class="date-track"><span v-for="d in dates" :key="d[0]" :style="{ left: d[1] + 'px' }">{{ d[0] }}</span></div>
          <div class="date-period">日线</div>
        </div>

        <div class="templates">
          <span class="tpl-on">默认</span>
          <span v-for="t in templates" :key="t" class="tpl">{{ t }}</span>
          <svg class="tpl-up" width="14" height="14" viewBox="0 0 14 14"><circle cx="7" cy="7" r="6" fill="none" stroke="#b02020" /><path d="M4.500 8.300h5L7 5.500z" fill="#bbb" /></svg>
        </div>

        <div class="bottom-tabs">
          <span v-for="t in bottomTabs" :key="t">{{ t }}</span>
          <span class="on">模拟交易</span>
          <svg class="collapse" width="12" height="14" viewBox="0 0 12 14" fill="none" stroke="#999" stroke-width="1.200"><path d="m1 6 5-5 5 5M1 13l5-5 5 5" /></svg>
        </div>
      </div>

      <aside class="right">
        <div class="quote-head">
          <div class="q-line">
            <b class="code">600597</b>
            <b class="name">光明乳业</b>
            <span class="r-box">R</span>
            <svg class="bell" width="18" height="20" viewBox="0 0 18 20" fill="none" stroke="#777"><rect x=".5" y=".5" width="17" height="19" /><path d="M5 14V8a4 4 0 0 1 8 0v6zM3.500 14h11M8 16.500h2" /></svg>
            <span class="add">+自选</span>
            <span class="add-drop"><i class="caret small dark"></i></span>
          </div>
          <div class="q-line second">
            <b class="price">15.68</b>
            <b class="chg">-0.70%</b>
            <b class="chg two">-0.11</b>
            <span class="buy">买入</span>
            <span class="sell">卖出</span>
          </div>
        </div>

        <div v-for="g in infoGroups" :key="g.cls" class="group" :class="g.cls">
          <div v-for="r in g.rows" :key="r[0]" class="irow">
            <span>{{ r[0] }}</span><span class="val" :class="r[2]">{{ r[1] }}</span>
            <span class="lab2">{{ r[3] }}</span><span class="val v2" :class="r[5]">{{ r[4] }}</span>
          </div>
        </div>

        <div class="deal-head">
          <span class="deal-title">逐笔成交</span>
          <svg class="lock" width="12" height="13" viewBox="0 0 12 13"><path d="M3 6V4a3 3 0 0 1 6 0v2" fill="none" stroke="#aaa" stroke-width="1.300" /><rect x="1" y="6" width="10" height="7" rx="1" fill="#aaa" /></svg>
          <span class="detail">[详]</span>
        </div>

        <div class="ticks">
          <div v-for="(t, i) in ticks" :key="i" class="trow">
            <span class="tm" :class="{ full: t[0].length > 2 }">{{ t[0] }}</span>
            <span class="pr">{{ t[1] }}<svg v-if="t[2]" class="arrow price-arrow" width="8" height="11" viewBox="0 0 8 11"><path v-if="t[2] === 'u'" d="M4 0 8 5H5.500v6h-3V5H0z" fill="#ff2020" /><path v-else d="M4 11 8 6H5.500V0h-3v6H0z" fill="#12a030" /></svg></span>
            <span class="vol" :class="t[4] === 'B' ? 'r' : 'g'">{{ t[3] }} {{ t[4] }}</span>
            <span class="c4" :class="t[5] && (isUp(t[5]) ? 'r' : 'g')">
              <template v-if="t[5]">{{ num(t[5]) }}<svg class="arrow" width="8" height="11" viewBox="0 0 8 11"><path v-if="isUp(t[5])" d="M4 0 8 5H5.500v6h-3V5H0z" fill="#ff2020" /><path v-else d="M4 11 8 6H5.500V0h-3v6H0z" fill="#12a030" /></svg></template>
            </span>
            <span class="c5" :class="t[6] && (isUp(t[6]) ? 'r' : 'g')">
              <template v-if="t[6]">{{ num(t[6]) }}<svg class="arrow" width="8" height="11" viewBox="0 0 8 11"><path v-if="isUp(t[6])" d="M4 0 8 5H5.500v6h-3V5H0z" fill="#ff2020" /><path v-else d="M4 11 8 6H5.500V0h-3v6H0z" fill="#12a030" /></svg></template>
            </span>
          </div>
          <div v-for="b in dealBoxes" :key="b.a" class="dbox" :class="[b.c, 'col' + b.col]" :style="{ top: b.top + 'px', height: b.h + 'px' }">
            <span>{{ b.a }}</span><span>{{ b.b }}</span>
          </div>
        </div>

        <div class="side-tabs">
          <span v-for="(t, i) in sideTabs" :key="t" :class="{ on: i === 0 }">{{ t }}</span>
        </div>
      </aside>
    </main>

    <div class="cut-row"><i></i><i></i><i></i><i></i></div>

    <div class="spot"></div>
    <svg class="cursor" width="13" height="18" viewBox="0 0 13 18"><path d="M1 1v13l3.500-3 2.500 5.500 2-1-2.500-5H11z" fill="#f4f0c0" stroke="#555" stroke-width=".6" /></svg>
  </div>
</template>

<style>
html, body { margin: 0; background: #000; }
</style>

<style scoped>
.app {
  position: relative;
  width: 1564px;
  height: 1018px;
  overflow: hidden;
  background: #000;
  color: #aaa;
  font: 12px "Liberation Sans", "Noto Sans CJK SC", sans-serif;
}
.topbar {
  display: flex;
  align-items: center;
  height: 24px;
  border-bottom: 1px solid #2a0b0d;
}
.logo {
  margin-left: 3px;
  font-size: 16px;
  font-weight: 700;
  color: #f2e2a4;
  white-space: nowrap;
}
.demo {
  margin-left: 4px;
  width: 25px;
  height: 16px;
  line-height: 15px;
  text-align: center;
  border: 1px solid #f2e2a4;
  color: #f2e2a4;
  font-size: 12px;
}
.sep {
  width: 1px;
  height: 17px;
  margin-left: 14px;
  background: #555;
}
.sep.light { margin: 0 16px 0 12px; background: #777; }
.menu {
  display: flex;
  gap: 30px;
  margin-left: 16px;
  font-size: 14px;
  color: #a0a0a0;
  white-space: nowrap;
}
.top-right {
  display: flex;
  align-items: center;
  margin-left: auto;
  padding-right: 0;
  white-space: nowrap;
}
.pill {
  display: flex;
  align-items: center;
  gap: 2px;
  height: 19px;
  padding: 0 3px;
  background: #000;
  border: 1px solid #f2e2a4;
  border-radius: 2px;
  color: #f2e2a4;
  font: 14px "Liberation Sans", "Noto Sans CJK SC", sans-serif;
}
.pill.ask { margin-left: 12px; border-color: #ccc; color: #ccc; }
.win { margin-right: 17px; flex: none; }
.win:last-child { margin-right: 0; transform: translateX(-1px); }

.tabs {
  display: flex;
  height: 24px;
  border-bottom: 1px solid #4d0f14;
  line-height: 24px;
}
.tab {
  position: relative;
  display: flex;
  align-items: center;
  justify-content: center;
  gap: 3px;
  flex: none;
  width: 121.100px;
  padding-right: 5px;
  border-right: 1px solid #3c0d10;
  box-sizing: border-box;
  color: #999;
  white-space: nowrap;
}
.tab.home { width: 94px; padding-right: 24px; }
.tab.fav { padding-right: 0; }
.tab.active { background: #ff4040; color: #f8e8e8; border-right: 0; padding-right: 8px; }
.tab-x { position: absolute; right: 7px; font-size: 15px; color: #ffc8c8; }
.zoom-tools {
  display: flex;
  align-items: center;
  flex: 1;
  gap: 6px;
  padding-left: 2px;
  color: #999;
  white-space: nowrap;
}
.zoom-tools .big { font-size: 20px; line-height: 20px; }
.zoom-tools .star { margin-left: 9px; }
.zoom-tools .pad { margin-left: 3px; flex: none; }

.body { display: flex; height: 958px; }
.left { width: 1272px; flex: none; border-right: 1px solid #5a1216; box-sizing: border-box; }
.toolbar {
  display: flex;
  align-items: center;
  height: 31px;
  padding-left: 9px;
  border-bottom: 1px solid #3c0d10;
  color: #c4c4c4;
}
.split-icon {
  width: 12px;
  height: 13px;
  border: 2px solid #ddd;
  background: linear-gradient(90deg, #000 50%, #ddd 50%);
  flex: none;
}
.split-icon.rev { margin-left: 3px; background: linear-gradient(90deg, #ddd 50%, #000 50%); }
.tb { margin-left: 13px; white-space: nowrap; }
.tb.first { margin-left: 7px; }
.tb.tight { margin-left: 11px; }
.tb.on { color: #e03030; position: relative; }
.tb.on::after {
  content: '';
  position: absolute;
  left: -6px;
  right: -6px;
  bottom: -5px;
  height: 2px;
  background: #e03030;
}
.tb.more { margin-left: 18px; }
.caret {
  display: inline-block;
  margin-left: 3px;
  border: 4px solid transparent;
  border-top: 5px solid #ccc;
  border-bottom: 0;
  vertical-align: 2px;
}
.caret.small { margin-left: 1px; border-width: 3px; border-top-width: 4px; border-bottom-width: 0; }
.caret.dark { border-top-color: #300; margin: 0; }
.tb-right {
  display: flex;
  align-items: center;
  gap: 15px;
  margin-left: auto;
  padding-right: 11px;
  white-space: nowrap;
}

.panel {
  display: flex;
  box-sizing: border-box;
  border-bottom: 1px solid #4d0f14;
}
.plot {
  position: relative;
  width: 1220px;
  flex: none;
  overflow: hidden;
}
.chart { position: absolute; left: 0; top: 0; display: block; }
.head {
  position: relative;
  display: flex;
  justify-content: space-between;
  height: 16px;
  line-height: 16px;
  white-space: nowrap;
}
.legend { display: flex; align-items: center; gap: 10px; padding-left: 2px; letter-spacing: .15px; }
.panel-main .legend { letter-spacing: 0; gap: 9px; }
.stock { color: #e8d880; }
.drop { margin: 0 -1px 0 3px; }
.tools {
  display: flex;
  align-items: center;
  gap: 5px;
  padding-right: 5px;
  color: #888;
}
.ptitle { margin-right: 0; }
.axis {
  position: relative;
  flex: 1;
  border-left: 1px solid #5a1216;
}
.tick {
  position: absolute;
  left: 4px;
  transform: translateY(-50%);
  font-size: 11px;
  color: #dadada;
}
.tick.unit { font-size: 15px; }
.hl { fill: #bbb; font: 11px "Liberation Sans", sans-serif; }
.mk-g { fill: #a8a8a8; }
.mk-w { fill: #e8e8e8; }
.mk-p { fill: #9050e0; }
.mk-r { fill: #e04848; }
.mk-text { font: 9px "Noto Sans CJK SC", sans-serif; }
.mt-g { fill: #eee; }
.mt-w { fill: #888; }
.mt-p { fill: #fff; }
.mt-r { fill: #ffe0e0; }

.dates { display: flex; height: 16px; border-bottom: 1px solid #4d0f14; }
.date-track { position: relative; width: 1220px; flex: none; color: #d0d0d0; }
.date-track span { position: absolute; top: 3px; transform: translateX(-50%); line-height: 15px; }
.date-period {
  flex: 1;
  margin-right: 0;
  background: #4a0e14;
  color: #a88;
  text-align: center;
  line-height: 16px;
  font-size: 13px;
}
.templates {
  display: flex;
  align-items: center;
  height: 24px;
  padding-bottom: 2px;
  box-sizing: border-box;
  border-bottom: 1px solid #4d0f14;
  color: #b0b0b0;
  white-space: nowrap;
}
.tpl-on {
  width: 67px;
  height: 20px;
  margin-right: 3px;
  line-height: 20px;
  border-radius: 2px;
  background: #ff4040;
  color: #f4e8e8;
  text-align: center;
  flex: none;
}
.tpl { width: 75px; text-align: center; flex: none; }
.tpl:nth-last-child(3) { margin-left: -5px; }
.tpl:nth-last-child(2) { margin-left: -4px; }
.tpl-up { position: absolute; left: 1185px; }
.bottom-tabs {
  position: relative;
  display: flex;
  height: 25px;
  line-height: 25px;
  background: #131313;
  color: #999;
  white-space: nowrap;
  width: 1271px;
}
.bottom-tabs > span {
  width: 90.700px;
  box-sizing: border-box;
  text-align: center;
  border-right: 1px solid #000;
}
.bottom-tabs > span:first-child { width: 88px; padding-right: 3px; }
.bottom-tabs > span.on { background: #ff4040; color: #f4e8e8; margin-left: 2px; }
.collapse { position: absolute; right: 9px; top: 6px; }

.right { position: relative; flex: 1; min-width: 0; overflow: hidden; }
.quote-head { height: 57px; border-bottom: 1px solid #5a1216; box-sizing: content-box; }
.q-line { position: relative; height: 31px; }
.q-line.second { height: 26px; }
.code { position: absolute; left: 6px; top: 6px; font-size: 17.500px; color: #eee; }
.name { position: absolute; left: 74px; top: 5px; font-size: 16px; color: #f6e08a; white-space: nowrap; }
.r-box {
  position: absolute;
  left: 145px;
  top: 11px;
  width: 36px;
  height: 15px;
  border: 1px solid #888;
  text-align: center;
  line-height: 15px;
  color: #999;
  font-size: 10px;
}
.bell { position: absolute; left: 187px; top: 9px; }
.add {
  position: absolute;
  left: 234px;
  top: 6px;
  width: 47px;
  height: 20px;
  border-radius: 2px;
  background: #ff4040;
  color: #f8e0e0;
  font-size: 13px;
  line-height: 20px;
  text-align: center;
}
.add-drop {
  position: absolute;
  left: 282px;
  top: 6px;
  width: 20px;
  height: 20px;
  border-radius: 2px;
  background: #ff4040;
  padding-left: 4px;
  box-sizing: border-box;
}
.price { position: absolute; left: 6px; top: 1px; font-size: 20px; color: #22b845; }
.chg { position: absolute; left: 64px; top: 4px; font-size: 16px; color: #22b845; }
.chg.two { left: 124px; }
.buy, .sell {
  position: absolute;
  top: 3px;
  width: 28px;
  height: 18px;
  line-height: 18px;
  text-align: center;
  border-radius: 2px;
  color: #eee;
}
.buy { left: 236px; background: #e01818; }
.sell { left: 266px; background: #118a2c; }

.group { box-sizing: border-box; border-bottom: 1px solid #3c0d10; }
.g1 { height: 90px; padding-top: 1px; }
.g2 { height: 25px; padding-top: 3px; }
.g3 { height: 91px; padding-top: 3px; }
.g4 { height: 67px; padding-top: 2px; }
.g5 { height: 46px; padding-top: 1px; }
.irow {
  display: grid;
  grid-template-columns: 70px 73px 70px 84px;
  width: 310px;
  height: 22px;
  padding-left: 3px;
  line-height: 22px;
  font-size: 14px;
  color: #c8c8c8;
  white-space: nowrap;
}
.irow .lab2 { padding-left: 10px; }
.val { text-align: right; }
.g { color: #1fb043; }
.r { color: #d83c3c; }
.w { color: #cfcfcf; }
.deal-head {
  position: relative;
  height: 23px;
  line-height: 23px;
  font-size: 13px;
  border-bottom: 1px solid #3c0d10;
  box-sizing: border-box;
  color: #b8b8b8;
}
.deal-title { position: absolute; left: 80px; }
.lock { position: absolute; left: 173px; top: 5px; }
.detail { position: absolute; left: 195px; font-size: 12px; }

.ticks {
  position: relative;
  height: 531px;
  padding: 1px 0 0 1px;
  border-bottom: 1px solid #4d0f14;
  box-sizing: content-box;
}
.trow {
  display: grid;
  grid-template-columns: 49px 67px 42px 46px 53px;
  height: 20px;
  line-height: 20px;
  white-space: nowrap;
}
.tm { text-align: right; color: #e0e0e0; }
.tm.full { color: #8e8e8e; }
.pr { padding-left: 20px; color: #1fb043; }
.vol, .c4, .c5 { text-align: right; }
.arrow { margin-left: 2px; vertical-align: -1px; }
.price-arrow { margin-left: 3px; }
.dbox {
  position: absolute;
  display: flex;
  flex-direction: column;
  justify-content: center;
  align-items: center;
  width: 55px;
  box-sizing: border-box;
  line-height: 20px;
  border: 1px solid;
}
.dbox.col1 { left: 163px; background: #000; }
.dbox.col2 { left: 217px; background: #000; }
.dbox.g { color: #2ab24c; border-color: #2ab24c; }
.dbox.r { color: #d8453c; border-color: #d8544c; }

.side-tabs {
  display: flex;
  height: 25px;
  line-height: 25px;
  background: #131313;
  font-size: 14px;
  color: #aaa;
  white-space: nowrap;
}
.side-tabs span {
  flex: none;
  width: 27px;
  box-sizing: border-box;
  text-align: center;
  border-right: 1px solid #3c0d10;
}
.side-tabs span.on { background: #ff4040; color: #f4e8e8; }

.cut-row {
  position: absolute;
  left: 0;
  top: 1008px;
  width: 100%;
  height: 10px;
  display: flex;
  border-top: 1px solid #5a1216;
  box-sizing: border-box;
}
.cut-row i { width: 283px; border-right: 1px solid #4d0f14; box-sizing: border-box; }
.cut-row i:first-child { width: 258px; }
.spot {
  position: absolute;
  left: 1377px;
  top: 339px;
  width: 60px;
  height: 60px;
  border-radius: 50%;
  background: rgba(195, 195, 0, .72);
  pointer-events: none;
}
.cursor { position: absolute; left: 1407px; top: 371px; pointer-events: none; }
</style>
